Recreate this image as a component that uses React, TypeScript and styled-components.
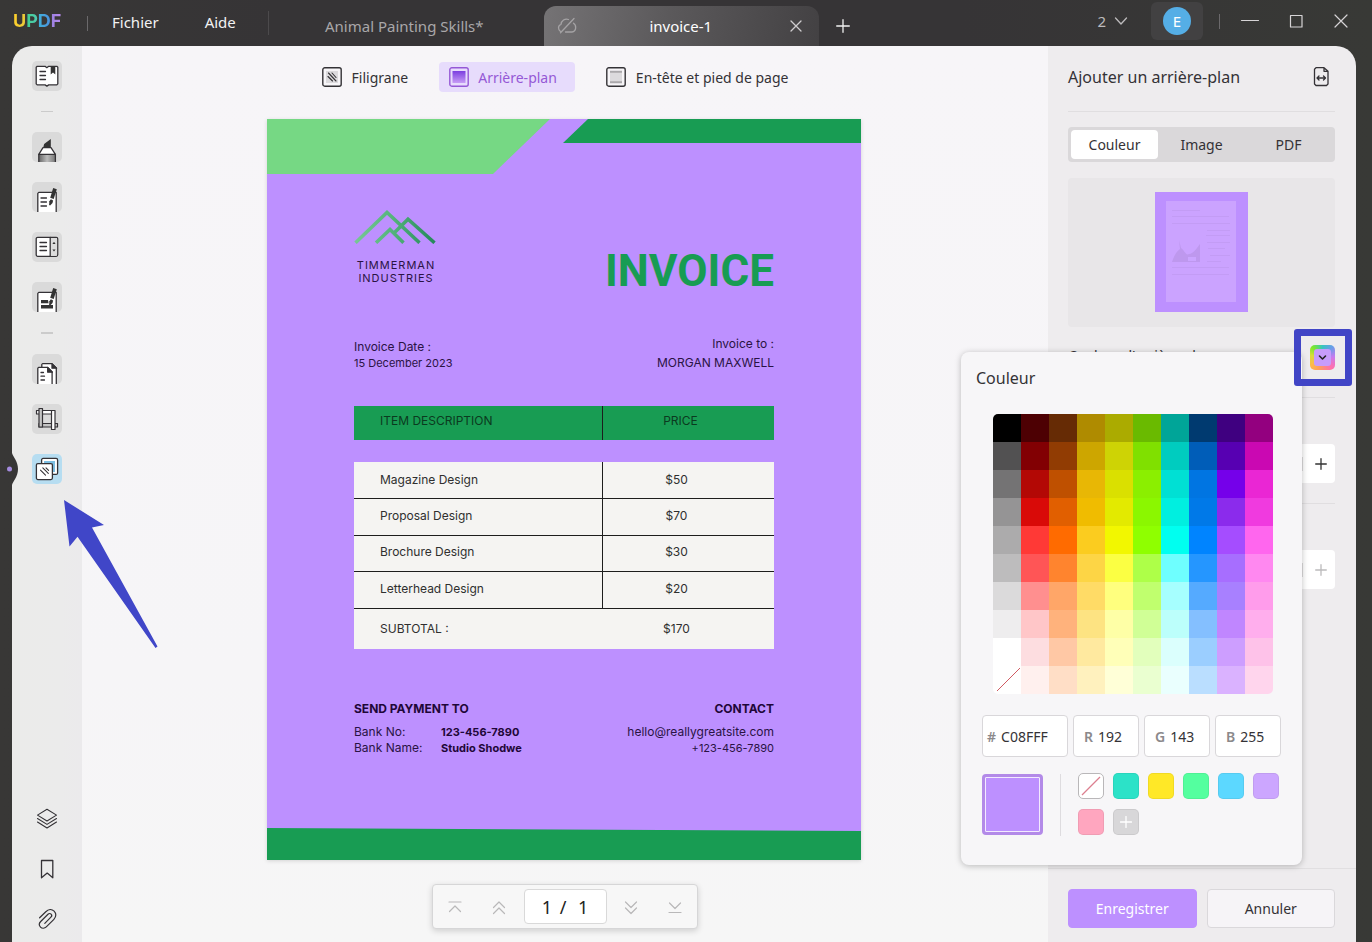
import React from "react";
import styled, { createGlobalStyle } from "styled-components";

const ink = "#343236";
const lilac = "#bd90ff";
const green = "#189c53";

const GlobalStyle = createGlobalStyle`
  *, *::before, *::after { box-sizing: border-box; }
  body { margin: 0; background: #363436; color: ${ink}; }
  body, button, input { font-family: "Noto Sans", "Open Sans", sans-serif; }
  button { border: 0; padding: 0; background: none; color: inherit; cursor: pointer; }
  h1, h2, p, dl, dd { margin: 0; }
  svg { display: block; }
`;

/* ---------- window frame ---------- */

const Window = styled.div`
  min-height: 100vh;
  display: flex;
  flex-direction: column;
  background: linear-gradient(90deg, #383736, #363436 20%, #363436 70%, #383936);
`;

const TitleBar = styled.header`
  height: 46px;
  display: flex;
  align-items: center;
  padding-left: 13px;
  padding-right: 24px;
  color: #f2f2f2;
`;

const Logo = styled.span`
  width: 74px;
  font: 700 18px/20px Inter, sans-serif;
  padding-bottom: 4px;
  color: #f5c52c;
`;

const LogoLetter = styled.span<{ $from: string; $to: string }>`
  background: linear-gradient(90deg, ${(p) => p.$from}, ${(p) => p.$to});
  background-clip: text;
  color: transparent;
`;

const BarRule = styled.span<{ $tall?: boolean }>`
  width: 1px;
  height: ${(p) => (p.$tall ? 24 : 15)}px;
  background: ${(p) => (p.$tall ? "#4c4a4c" : "#6b696b")};
`;

const Menu = styled.nav`
  display: flex;
  gap: 46px;
  padding: 0 32px 3px 24px;
`;

const MenuItem = styled.button`
  font-size: 15px;
  line-height: 22px;
`;

const Tabs = styled.div`
  align-self: stretch;
  display: flex;
  align-items: stretch;
  padding-top: 6px;
`;

const Tab = styled.div<{ $active?: boolean }>`
  width: 275px;
  display: flex;
  align-items: center;
  padding: 0 17px 0 13px;
  border-radius: 12px 12px 0 0;
  color: ${(p) => (p.$active ? "#ffffff" : "#a9a7a9")};
  background: ${(p) => (p.$active ? "linear-gradient(100deg, #757375, #5b595b 45%, #434143)" : "none")};
`;

const TabTitle = styled.button<{ $shift?: boolean }>`
  flex: 1;
  padding-right: ${(p) => (p.$shift ? 5 : 0)}px;
  font-size: 15px;
  line-height: 22px;
  text-align: center;
`;

const GlyphButton = styled.button`
  display: grid;
  place-items: center;
`;

const NewTab = styled(GlyphButton)`
  margin-left: 17px;
`;

const BarEnd = styled.div`
  margin-left: auto;
  display: flex;
  align-items: center;
  padding-bottom: 4px;
`;

const WindowCount = styled.button`
  display: flex;
  align-items: center;
  gap: 8px;
  margin-right: 23px;
  color: #bdbbbd;
  font-size: 15px;
  line-height: 22px;
`;

const Account = styled.button`
  width: 52px;
  height: 38px;
  display: grid;
  place-items: center;
  margin-right: 16px;
  border-radius: 6px;
  background: #424142;
`;

const Avatar = styled.span`
  width: 28px;
  height: 28px;
  border-radius: 50%;
  background: #55aee6;
  color: #ffffff;
  font-size: 15px;
  line-height: 29px;
`;

const WindowButtons = styled.div`
  display: flex;
  gap: 27px;
  padding-left: 20px;
`;

const Body = styled.div`
  position: relative;
  flex: 1;
  display: flex;
  margin: 0 16px 0 12px;
`;

/* ---------- left tool rail ---------- */

const Rail = styled.aside`
  position: relative;
  width: 70px;
  flex: none;
  display: flex;
  flex-direction: column;
  justify-content: space-between;
  align-items: center;
  padding: 15px 0 8px;
  border-radius: 20px 0 0 0;
  background: linear-gradient(90deg, #ebebea, #ebebeb 70%, #ebeaec);
`;

const RailGroup = styled.div`
  display: flex;
  flex-direction: column;
  align-items: center;
  gap: 20px;
`;

const Tool = styled.button<{ $plain?: boolean; $active?: boolean }>`
  width: 30px;
  height: 30px;
  overflow: hidden;
  border-radius: 5px;
  background: ${(p) => (p.$active ? "#b6ddf1" : p.$plain ? "none" : "#dadada")};
`;

const RailRule = styled.span<{ $bold?: boolean }>`
  width: 12px;
  height: ${(p) => (p.$bold ? 2 : 1)}px;
  background: #cbcbcb;
`;

const RailHandle = styled.button`
  position: absolute;
  left: -6px;
  top: 407px;
  width: 12px;
  height: 32px;
`;

const Pointer = styled.svg`
  position: absolute;
  left: 50px;
  top: 452px;
  pointer-events: none;
`;

/* ---------- document area ---------- */

const Main = styled.main`
  flex: 1;
  min-width: 0;
  display: flex;
  flex-direction: column;
  align-items: center;
  padding: 16px 0 13px;
  background: linear-gradient(#f7f5f8, #f6f5f7 70%, #f6f6f6);
`;

const PageTools = styled.div`
  display: flex;
  gap: 21px;
  padding-right: 20px;
  margin-bottom: 27px;
`;

const PageTool = styled.button<{ $active?: boolean }>`
  height: 30px;
  display: flex;
  align-items: center;
  gap: ${(p) => (p.$active ? 9 : 10)}px;
  padding: 0 ${(p) => (p.$active ? 18 : 10)}px 0 10px;
  border-radius: 4px;
  font-size: 14px;
  line-height: 20px;
  color: ${(p) => (p.$active ? "#9558d6" : ink)};
  background: ${(p) => (p.$active ? "#e7dcfc" : "none")};
  span { padding-top: 2px; }
`;

const Sheet = styled.article`
  width: 100%;
  max-width: 594px;
  min-height: 741px;
  display: flex;
  flex-direction: column;
  margin: 0 2px 24px 0;
  background: ${lilac};
  box-shadow: 0 1px 4px rgba(0, 0, 0, 0.14);
  color: #2a1344;
  font: 400 12px/16px Inter, sans-serif;
`;

const SheetContent = styled.div`
  padding: 35px 87px 0;
`;

const SheetRow = styled.div<{ $gap?: number; $bottom?: boolean }>`
  display: flex;
  justify-content: space-between;
  align-items: ${(p) => (p.$bottom ? "flex-end" : "flex-start")};
  margin-top: ${(p) => p.$gap ?? 0}px;
`;

const Brand = styled.div`
  height: 86px;
  width: 84px;
`;

const BrandName = styled.p`
  margin-top: 15px;
  font-size: 11px;
  line-height: 13px;
  letter-spacing: 1px;
  text-align: center;
`;

const InvoiceTitle = styled.h1`
  color: ${green};
  font: 700 44px/48px Roboto, sans-serif;
`;

const MetaBlock = styled.div<{ $right?: boolean }>`
  display: flex;
  flex-direction: column;
  gap: ${(p) => (p.$right ? 3 : 0)}px;
  text-align: ${(p) => (p.$right ? "right" : "left")};
`;

const InvoiceDate = styled.p`
  font-size: 11px;
`;

const Items = styled.table`
  width: 100%;
  margin-top: 35px;
  border-spacing: 0;
  color: #2f2f2f;
  th, td { font-weight: 400; text-align: left; padding: 0 0 0 26px; }
  tbody::before { content: ""; display: block; height: 22px; }
  th { background: ${green}; color: #0b3a20; padding-bottom: 4px; }
  td { background: #f5f4f2; }
`;

const ItemRow = styled.tr<{ $height: number; $raised?: boolean; $open?: boolean }>`
  height: ${(p) => p.$height}px;
  & > * { border-bottom: ${(p) => (p.$open ? "0" : "1px solid #1d1d1d")}; }
  & > :not(:last-child) { border-right: ${(p) => (p.$open ? "0" : "1px solid #1d1d1d")}; }
  td { padding-bottom: ${(p) => (p.$raised ? 3 : 0)}px; }
  th { border-bottom: 0; }
  & > :last-child { width: 171px; padding-left: 0; padding-right: 24px; text-align: center; }
  th:last-child { padding-right: 16px; }
`;

const Payment = styled.dl`
  display: grid;
  grid-template-columns: 87px auto;
  dd { font-size: 11px; font-weight: 700; color: #1f0738; }
`;

const SheetHeading = styled.h2`
  margin-bottom: 7px;
  font: 700 12px/16px Inter, sans-serif;
  color: #1f0738;
`;

const Contact = styled.address`
  text-align: right;
  font-style: normal;
`;

const SheetFoot = styled.div`
  margin-top: auto;
`;

const Pager = styled.div`
  width: 266px;
  height: 45px;
  display: flex;
  align-items: center;
  justify-content: space-between;
  padding: 0 10px;
  border: 1px solid #d6d6d7;
  border-radius: 4px;
  background: #f7f7f7;
  box-shadow: 0 2px 6px rgba(0, 0, 0, 0.16);
`;

const PagerPair = styled.div`
  display: flex;
  gap: 20px;
`;

const PagerButton = styled.button`
  width: 24px;
  height: 24px;
  display: grid;
  place-items: center;
  color: #b9b8b9;
`;

const PageBox = styled.label`
  width: 83px;
  height: 35px;
  display: flex;
  align-items: center;
  justify-content: center;
  gap: 7px;
  border: 1px solid #d9d9d9;
  border-radius: 4px;
  background: #ffffff;
  font-size: 18px;
  line-height: 24px;
  color: #222222;
`;

const PageInput = styled.input`
  width: 11px;
  padding: 0;
  border: 0;
  outline: 0;
  background: none;
  font-size: 18px;
  line-height: 24px;
  color: inherit;
`;

/* ---------- settings panel ---------- */

const Panel = styled.aside`
  width: 308px;
  flex: none;
  display: flex;
  flex-direction: column;
  border-radius: 0 20px 0 0;
  background: #eeecee;
`;

const PanelContent = styled.div`
  flex: 1;
  padding: 0 21px 0 20px;
`;

const PanelHead = styled.div`
  height: 66px;
  display: flex;
  align-items: center;
  justify-content: space-between;
  padding: 0 4px 3px 0;
  border-bottom: 1px solid #e0dee0;
`;

const PanelTitle = styled.h2`
  font-size: 16px;
  line-height: 24px;
  font-weight: 400;
`;

const Segments = styled.div`
  height: 35px;
  display: grid;
  grid-template-columns: repeat(3, 1fr);
  padding: 3px;
  margin: 15px 0 16px;
  border-radius: 4px;
  background: #dad8da;
`;

const Segment = styled.button<{ $active?: boolean }>`
  border-radius: 4px;
  font-size: 14px;
  line-height: 20px;
  background: ${(p) => (p.$active ? "#ffffff" : "none")};
`;

const Preview = styled.div`
  height: 149px;
  display: flex;
  justify-content: center;
  padding-top: 14px;
  border-radius: 4px;
  background: #e8e6e8;
`;

const ColorRow = styled.div`
  position: relative;
  height: 71px;
  display: flex;
  justify-content: space-between;
  padding-top: 18px;
  border-bottom: 1px solid #e0dee0;
  font-size: 14px;
  line-height: 22px;
`;

const ColorTrigger = styled.button`
  width: 25px;
  height: 25px;
  padding: 4px;
  border-radius: 5px;
  background: conic-gradient(#38c5c0, #6a9de8 12%, #c67af0 24%, #ff6fae 38%, #ff9e5c 55%, #ffb84a 65%, #d8dc3a 78%, #7ce82c 88%, #38c5c0);
`;

const TriggerFace = styled.span`
  width: 17px;
  height: 17px;
  display: grid;
  place-items: center;
  border-radius: 3px;
  background: #c79cfb;
`;

const Highlight = styled.span`
  position: absolute;
  z-index: 3;
  right: -17px;
  top: 2px;
  width: 58px;
  height: 57px;
  border: 7px solid #4145c6;
  border-radius: 3px;
  pointer-events: none;
`;

const StepperRow = styled.div<{ $last?: boolean }>`
  display: flex;
  justify-content: flex-end;
  padding: 46px 0 20px;
  border-bottom: ${(p) => (p.$last ? "0" : "1px solid #e0dee0")};
`;

const Stepper = styled.div<{ $muted?: boolean }>`
  width: 120px;
  height: 39px;
  display: flex;
  align-items: center;
  justify-content: flex-end;
  border-radius: 4px;
  background: #ffffff;
  color: ${(p) => (p.$muted ? "#bcbabc" : "#333333")};
`;

const StepButton = styled.button`
  width: 33px;
  height: 14px;
  display: grid;
  place-items: center;
  padding-left: 4px;
  border-left: 1px solid #dddbdd;
`;

const PanelFoot = styled.div`
  display: grid;
  grid-template-columns: 1fr 1fr;
  gap: 10px;
  padding: 20px 21px 14px 20px;
  border-top: 1px solid #e1dfe1;
`;

const Action = styled.button<{ $primary?: boolean }>`
  height: 39px;
  border: 1px solid ${(p) => (p.$primary ? lilac : "#dad8db")};
  border-radius: 4px;
  background: ${(p) => (p.$primary ? lilac : "#f6f4f7")};
  color: ${(p) => (p.$primary ? "#ffffff" : ink)};
  font-size: 14px;
  line-height: 20px;
`;

/* ---------- colour popover ---------- */

const Popover = styled.section`
  position: absolute;
  z-index: 2;
  right: 33px;
  top: 25px;
  width: 341px;
  height: 513px;
  padding: 14px 21px 0;
  border-radius: 8px;
  background: #f7f6f8;
  box-shadow: 0 1px 6px rgba(0, 0, 0, 0.25);
`;

const PopTitle = styled(PanelTitle)`
  margin: 0 0 24px -6px;
`;

const Palette = styled.div`
  width: 280px;
  display: grid;
  grid-template-columns: repeat(10, 1fr);
  margin-left: 11px;
  border-radius: 5px;
  overflow: hidden;
`;

const PaletteCell = styled.button<{ $color: string }>`
  height: 28px;
  background: ${(p) => p.$color};
`;

const Channels = styled.div`
  display: grid;
  grid-template-columns: 86px repeat(3, 66px);
  gap: 5px;
  margin: 21px 0 16px;
`;

const Channel = styled.label<{ $hex?: boolean }>`
  height: 42px;
  display: flex;
  align-items: center;
  gap: 5px;
  padding: 1px 0 0 ${(p) => (p.$hex ? 4 : 10)}px;
  border: 1px solid #d9d7da;
  border-radius: 4px;
  background: #ffffff;
  font-size: 14px;
  line-height: 20px;
  font-weight: 600;
  color: #8b898b;
`;

const ChannelInput = styled.input`
  min-width: 0;
  flex: 1;
  padding: 0;
  border: 0;
  outline: 0;
  background: none;
  font-size: 14px;
  line-height: 20px;
  color: ${ink};
`;

const SwatchArea = styled.div`
  display: flex;
`;

const CurrentColor = styled.div`
  width: 61px;
  height: 61px;
  margin-top: 1px;
  border: 3px solid #b38ae8;
  border-radius: 4px;
  background: ${lilac};
  box-shadow: inset 0 0 0 1px #f3eaff;
`;

const SwatchRule = styled.span`
  width: 1px;
  height: 62px;
  margin: 1px 17px 0 17px;
  background: #dedcdf;
`;

const Swatches = styled.div`
  display: grid;
  grid-template-columns: repeat(6, 26px);
  grid-auto-rows: 26px;
  gap: 10px 9px;
`;

const Swatch = styled.button<{ $color: string; $edge?: string }>`
  display: grid;
  place-items: center;
  overflow: hidden;
  border: 1px solid ${(p) => p.$edge ?? "rgba(0, 0, 0, 0.06)"};
  border-radius: 5px;
  background: ${(p) => p.$color};
`;

/* ---------- data ---------- */

const palette = [
  "#000000 #4d0003 #662b05 #af8b00 #abab00 #6aba00 #00a598 #003a70 #3f0080 #93007f",
  "#525152 #820003 #913c03 #cda600 #ced305 #80e000 #00ccbf #005db8 #5700b2 #ca08b2",
  "#747374 #b30805 #bf5000 #e8b705 #dae000 #8bef00 #00e0d4 #0075e2 #7500ea #ea26d4",
  "#959495 #d90a08 #e15f00 #f0bc00 #e3ea00 #8bf700 #00efe0 #0079e8 #8b2bec #f03adf",
  "#acabac #ff3936 #ff6b00 #fbcc1f #f2f700 #8fff00 #00fff0 #0084ff #a54dff #ff66ee",
  "#bdbcbd #ff5556 #ff842e #fdd545 #fbff43 #aeff48 #6effff #2596ff #a76eff #ff88f0",
  "#dbdadb #ff8f8f #ffa668 #ffdb66 #ffff7e #c0ff6e #a6ffff #55aaff #a880ff #ff9ceb",
  "#eeedee #ffc6c8 #ffb27c #fde382 #feffa6 #d0ff96 #bcfffb #84bfff #c086ff #ffaeed",
  "#ffffff #fddde0 #ffc8a5 #ffe99f #ffffb8 #e2ffbc #dbfffd #9bceff #cd9eff #fec2e9",
  "#ffffff #fff0ee #ffdec6 #fff1be #ffffd7 #eaffd0 #eafffe #badeff #dab2ff #ffd5ed",
].map((row) => row.split(" "));

const savedColors = ["#2ce2c8", "#ffe827", "#54ff9f", "#5cd8ff", "#cca6ff"];

const items = [
  { name: "Magazine Design", price: "$50", height: 37 },
  { name: "Proposal Design", price: "$70", height: 37 },
  { name: "Brochure Design", price: "$30", height: 36 },
  { name: "Letterhead Design", price: "$20", height: 37 },
];

/* ---------- icons ---------- */

type IconProps = { size?: number; width?: number; children: React.ReactNode };

const Icon = ({ size = 30, width = 1.3, children }: IconProps) => (
  <svg width={size} height={size} viewBox={`0 0 ${size} ${size}`} fill="none" stroke="currentColor"
    strokeWidth={width} strokeLinecap="round" strokeLinejoin="round" aria-hidden="true">
    {children}
  </svg>
);

const Pen = () => (
  <g stroke="none" fill="#333">
    <path d="M21.2 6l3.600 1.200-3.100 9.800-3.500-1.200z" />
    <path d="M17.400 19.300l1.500-2 2.200 1.100-.6 2.500-2.400 2.700-1-.6z" />
  </g>
);

const tools: Record<string, React.ReactNode> = {
  Lecteur: (
    <Icon>
      <path d="M5.2 5.3h7.9l1.7 1.4 1.9-1.4h8.1l1 1v16.6l-1 1h-8.1l-1.8 1.2-1.8-1.2H5.2l-1-1V6.3z" fill="#fff" />
      <path d="M8 10.5h5.5M8 14.5h5.5M8 18.5h5.5" />
      <path d="M18.7 5h4.6v8.4L21 11.6l-2.3 1.8z" fill="#333" stroke="none" />
    </Icon>
  ),
  Commentaire: (
    <Icon>
      <defs>
        <linearGradient id="marker" x1="0" x2="1"><stop offset="0" stopColor="#666" /><stop offset=".5" stopColor="#bbb" /><stop offset="1" stopColor="#777" /></linearGradient>
      </defs>
      <path d="M6.8 31v-8.7h16.6V31" fill="url(#marker)" />
      <path d="M11 15.7h8l4.4 6.6H6.8z" fill="#fff" />
      <path d="M11.3 15.3l.8-3.4L18.8 7v8.3z" fill="#333" stroke="none" />
    </Icon>
  ),
  Modifier: (
    <Icon>
      <path d="M5.8 31V11.4l1-1h17.4V31" fill="#fff" />
      <path d="M9 16h5.5M9 20h5.5M9 24h5.5" />
      <Pen />
    </Icon>
  ),
  Formulaire: (
    <Icon>
      <rect x="4.2" y="5.3" width="21.5" height="19" rx="1.5" fill="#fff" />
      <path d="M18.4 5.9h6l.7 1v15.8l-.7 1h-6z" fill="#dcdcdc" stroke="none" />
      <path d="M18.2 5.3v19M8 10.5h6.5M8 14.5h6.5M8 18.5h6.5" />
      <path d="M22 9.8l1.6 2.2h-3.2zM22 19.6l1.6-2.2h-3.2z" fill="#333" stroke="none" />
    </Icon>
  ),
  Biffer: (
    <Icon>
      <path d="M5.8 31V11.4l1-1h17.4V31" fill="#fff" />
      <path d="M9 18h7l.6 3.200H9zM9 23h12v3.400H9z" fill="#333" stroke="none" />
      <Pen />
    </Icon>
  ),
  Pages: (
    <Icon>
      <path d="M9.8 14V10.4l.8-.8h9.2l4.5 4.3V31h-5" fill="#fff" />
      <path d="M20 9.700v4.500h4.600z" fill="#333" />
      <path d="M5.8 31V14.2l.8-.8h9l4.5 4.6V31" fill="#fff" />
      <path d="M15.700 13.400v4.800h4.700z" fill="#333" />
      <path d="M9 18.5h2.500M9 22.200h3.500M9 26h3.500" />
    </Icon>
  ),
  Rogner: (
    <Icon width={1.200}>
      <path d="M4.500 6.500h18v3.500h-18z" fill="#fff" />
      <path d="M7 19.500h18.500V23H7z" fill="#c4c4c4" />
      <path d="M7 4.500h3.500V23H7z" fill="#c4c4c4" />
      <path d="M19.500 6.500H23v19h-3.500z" fill="#fff" />
    </Icon>
  ),
  "Outils de page": (
    <Icon>
      <rect x="9.6" y="4.4" width="16" height="16" rx="1.5" fill="#fff" />
      <path d="M12 7h11v11h-3V9.5h-8z" fill="#7dbfe2" stroke="none" />
      <rect x="4.4" y="9.6" width="16" height="16" rx="1.5" fill="#fff" />
      <path d="M8.500 16.200l5 5M10.800 13.800l5.500 5.500M14 13.800l2.600 2.600" strokeWidth="1.100" />
    </Icon>
  ),
};

const lowerTools: Record<string, React.ReactNode> = {
  Calques: (
    <Icon width={1.1}>
      <path d="M15 5.3l9.5 5.8L15 17l-9.500-5.900z" />
      <path d="M5.500 14.500L15 20.400l9.500-5.900M5.500 18L15 24l9.500-6" />
    </Icon>
  ),
  Signets: (
    <Icon width={1.300}>
      <path d="M9.500 6.500h11.300v17.300l-5.600-4.700-5.700 4.700z" />
    </Icon>
  ),
  "Pièces jointes": (
    <Icon width={1.200}>
      <path d="M7.600 13.800l6.200-6.100c2.600-2.600 6-2.800 8.300-.6s2.300 5.700-.2 8.200l-7.600 7.600c-1.700 1.700-4.300 1.800-5.800.2s-1.500-3.900.2-5.600l7.300-7.200c1-1 2.300-1 3.100-.2s.8 2.100-.2 3.100l-6.100 6.100" />
    </Icon>
  ),
};

const Plus = ({ size = 12 }: { size?: number }) => (
  <Icon size={size} width={1.3}>
    <path d={`M${size / 2} .7V${size - 0.7}M.7 ${size / 2}H${size - 0.7}`} />
  </Icon>
);

const SheetPreview = () => (
  <svg width="93" height="120" viewBox="0 0 93 120" aria-label="Aperçu">
    <rect width="93" height="120" fill={lilac} />
    <rect x="11" y="9" width="70" height="101" fill="#cba3ff" />
    <g stroke="#c39cf5" strokeWidth="1">
      <path d="M17 18.500h28M17 24.500h57M17 31.500h58M52 38.500h23M51 43.500h24M52 50.500h23M53 56.500h17M55 63.500h20M52 69.500h14M17 75.500h57M17 82.500h57" />
    </g>
    <path d="M17 70c2-6 4-10 8-13l-1-9 2 8c4 3 5 8 8 6 4 0 8-6 11-10v18z" fill="#be98ee" />
    <path d="M33 65h8v4h-8z" fill="#cba5ff" />
  </svg>
);

/* ---------- app ---------- */

export default function App() {
  return (
    <Window>
      <GlobalStyle />
      <TitleBar>
        <Logo>
          <LogoLetter $from="#ffd02b" $to="#e8c83a">U</LogoLetter>
          <LogoLetter $from="#3fd08c" $to="#52c8b4">P</LogoLetter>
          <LogoLetter $from="#3fb0d8" $to="#4c8fe0">D</LogoLetter>
          <LogoLetter $from="#9a80e0" $to="#b98af0">F</LogoLetter>
        </Logo>
        <BarRule />
        <Menu>
          <MenuItem>Fichier</MenuItem>
          <MenuItem>Aide</MenuItem>
        </Menu>
        <BarRule $tall />
        <Tabs>
          <Tab>
            <TabTitle>Animal Painting Skills*</TabTitle>
          </Tab>
          <Tab $active>
            <Icon size={20} width={1.3}>
              <path d="M3.500 15.500C.8 13.500.7 9.500 4 8.500 4.300 4.500 8 2.300 11.500 3.500M16.500 7.200c3.200 2 3 8.300-1.500 8.800H8.500M17 2.500L3.500 16.800" stroke="#a5a3a5" />
            </Icon>
            <TabTitle $shift>invoice-1</TabTitle>
            <GlyphButton aria-label="Fermer l'onglet">
              <Icon size={12}><path d="M1 1l10 10M11 1L1 11" stroke="#cfcdcf" /></Icon>
            </GlyphButton>
          </Tab>
          <NewTab aria-label="Nouvel onglet"><Plus size={14} /></NewTab>
        </Tabs>
        <BarEnd>
          <WindowCount>
            2
            <Icon size={14}><path d="M1.500 4l5.500 6 5.500-6" /></Icon>
          </WindowCount>
          <Account aria-label="Compte"><Avatar>E</Avatar></Account>
          <BarRule />
          <WindowButtons>
            <GlyphButton aria-label="Réduire"><Icon size={20} width={1.2}><path d="M1.500 9.500h17" stroke="#d6d4d6" /></Icon></GlyphButton>
            <GlyphButton aria-label="Agrandir"><Icon size={20} width={1.2}><path d="M3.500 4.500h11.500v11.500H3.500z" stroke="#d6d4d6" /></Icon></GlyphButton>
            <GlyphButton aria-label="Fermer"><Icon size={14} width={1.2}><path d="M1 1l12 12M13 1L1 13" stroke="#d6d4d6" /></Icon></GlyphButton>
          </WindowButtons>
        </BarEnd>
      </TitleBar>

      <Body>
        <Rail>
          <RailGroup>
            {Object.entries(tools).map(([name, icon]) => (
              <React.Fragment key={name}>
                {name === "Commentaire" && <RailRule />}
                {name === "Pages" && <RailRule $bold />}
                <Tool aria-label={name} $active={name === "Outils de page"}>{icon}</Tool>
              </React.Fragment>
            ))}
          </RailGroup>
          <RailGroup>
            {Object.entries(lowerTools).map(([name, icon]) => (
              <Tool key={name} $plain aria-label={name}>{icon}</Tool>
            ))}
          </RailGroup>
          <RailHandle aria-label="Replier la barre">
            <svg width="12" height="32" viewBox="0 0 12 32">
              <path d="M6 0c1 4 6 8 6 16s-5 12-6 16z" fill="#373636" />
              <circle cx="3.5" cy="16" r="2.5" fill="#a48be0" />
            </svg>
          </RailHandle>
        </Rail>

        <Main>
          <PageTools>
            <PageTool>
              <Icon size={20} width={1.4}>
                <rect x=".8" y=".8" width="18.4" height="18.4" rx="2" />
                <rect x="4" y="4" width="12" height="12" fill="#dcdadd" stroke="none" />
                <path d="M6 9.500l4.500 4.500M6.500 6l7.500 8M10 6l4 4.500" strokeWidth="1.100" />
              </Icon>
              <span>Filigrane</span>
            </PageTool>
            <PageTool $active>
              <Icon size={20} width={1.4}>
                <defs>
                  <linearGradient id="fill" x1="0" y1="0" x2="0" y2="1"><stop offset="0" stopColor="#7b3fe0" /><stop offset="1" stopColor="#c79cf5" /></linearGradient>
                </defs>
                <rect x=".8" y=".8" width="18.4" height="18.4" rx="2" />
                <rect x="3.500" y="4" width="13" height="12" fill="url(#fill)" stroke="none" />
              </Icon>
              <span>Arrière-plan</span>
            </PageTool>
            <PageTool>
              <Icon size={20} width={1.4}>
                <rect x=".8" y=".8" width="18.4" height="18.4" rx="2" />
                <rect x="4" y="4" width="12" height="12" fill="#dcdadd" stroke="none" />
                <path d="M4 4.800h12M4 15.200h12" stroke="#aaa8ab" strokeWidth="2" strokeLinecap="butt" />
              </Icon>
              <span>En-tête et pied de page</span>
            </PageTool>
          </PageTools>

          <Sheet>
            <svg width="100%" height="55" viewBox="0 0 594 55" preserveAspectRatio="none" aria-hidden="true">
              <path d="M0 0h283l-57 55H0z" fill="#76d884" />
              <path d="M321 0h273v24H296z" fill={green} />
            </svg>
            <SheetContent>
              <SheetRow $bottom>
                <Brand>
                  <svg width="82" height="35" viewBox="0 0 82 35" fill="none" stroke="url(#peaks)" strokeWidth="3.500" aria-hidden="true">
                    <defs>
                      <linearGradient id="peaks" gradientUnits="userSpaceOnUse" x1="0" y1="0" x2="82" y2="0">
                        <stop offset="0" stopColor="#78c796" /><stop offset=".45" stopColor="#55b57c" /><stop offset="1" stopColor="#23875a" />
                      </linearGradient>
                    </defs>
                    <path d="M1.500 33.800L33 3.500l32.500 30.300M39 25L54 10.200l26.500 23.600M22 33.800l14-13.300 13.500 13.300" />
                  </svg>
                  <BrandName>TIMMERMAN<br />INDUSTRIES</BrandName>
                </Brand>
                <InvoiceTitle>INVOICE</InvoiceTitle>
              </SheetRow>
              <SheetRow $bottom $gap={41}>
                <MetaBlock><p>Invoice Date :</p><InvoiceDate>15 December 2023</InvoiceDate></MetaBlock>
                <MetaBlock $right><p>Invoice to :</p><p>MORGAN MAXWELL</p></MetaBlock>
              </SheetRow>
              <Items>
                <thead>
                  <ItemRow $height={34}><th scope="col">ITEM DESCRIPTION</th><th scope="col">PRICE</th></ItemRow>
                </thead>
                <tbody>
                  {items.map((item, i) => (
                    <ItemRow key={item.name} $height={item.height} $raised={i > 0}>
                      <td>{item.name}</td><td>{item.price}</td>
                    </ItemRow>
                  ))}
                  <ItemRow $height={40} $open><td>SUBTOTAL :</td><td>$170</td></ItemRow>
                </tbody>
              </Items>
              <SheetRow $gap={52}>
                <div>
                  <SheetHeading>SEND PAYMENT TO</SheetHeading>
                  <Payment>
                    <dt>Bank No:</dt><dd>123-456-7890</dd>
                    <dt>Bank Name:</dt><dd>Studio Shodwe</dd>
                  </Payment>
                </div>
                <Contact>
                  <SheetHeading>CONTACT</SheetHeading>
                  <p>hello@reallygreatsite.com</p>
                  <InvoiceDate as="p">+123-456-7890</InvoiceDate>
                </Contact>
              </SheetRow>
            </SheetContent>
            <SheetFoot>
              <svg width="100%" height="32" viewBox="0 0 594 32" preserveAspectRatio="none" aria-hidden="true">
                <path d="M0 0l594 3v29H0z" fill={green} />
              </svg>
            </SheetFoot>
          </Sheet>

          <Pager>
            <PagerPair>
              <PagerButton aria-label="Première page"><Icon size={16} width={1.2}><path d="M2 3h12M2.500 12.500L8 7l5.500 5.500" /></Icon></PagerButton>
              <PagerButton aria-label="Page précédente"><Icon size={16} width={1.2}><path d="M2.500 8.500L8 3l5.500 5.500M2.500 14.500L8 9l5.500 5.500" /></Icon></PagerButton>
            </PagerPair>
            <PageBox>
              <PageInput defaultValue="1" aria-label="Page" />
              <span>/</span>
              <span>&nbsp;1</span>
            </PageBox>
            <PagerPair>
              <PagerButton aria-label="Page suivante"><Icon size={16} width={1.2}><path d="M2.500 3L8 8.500 13.500 3M2.500 9L8 14.500 13.500 9" /></Icon></PagerButton>
              <PagerButton aria-label="Dernière page"><Icon size={16} width={1.2}><path d="M2.500 4L8 9.500 13.500 4M2 13.500h12" /></Icon></PagerButton>
            </PagerPair>
          </Pager>
        </Main>

        <Panel>
          <PanelContent>
            <PanelHead>
              <PanelTitle>Ajouter un arrière-plan</PanelTitle>
              <GlyphButton aria-label="Plage de pages">
                <Icon size={20}>
                  <path d="M5 .700h8l4 3.600V17l-1.500 1.500H5L3.500 17V2.200zM13 .700v3.600h4" />
                  <path d="M6.200 11h8M8 9l-2 2 2 2M12.500 9l2 2-2 2" />
                </Icon>
              </GlyphButton>
            </PanelHead>
            <Segments>
              <Segment $active>Couleur</Segment>
              <Segment>Image</Segment>
              <Segment>PDF</Segment>
            </Segments>
            <Preview><SheetPreview /></Preview>
            <ColorRow>
              <span>Couleur d'arrière-plan</span>
              <ColorTrigger aria-label="Choisir la couleur">
                <TriggerFace>
                  <Icon size={9} width={1.6}><path d="M1.500 3l3 3 3-3" stroke="#222" /></Icon>
                </TriggerFace>
              </ColorTrigger>
              <Highlight />
              <Popover aria-label="Couleur">
                <PopTitle>Couleur</PopTitle>
                <Palette>
                  {palette.flatMap((row, r) =>
                    row.map((color, c) => (
                      <PaletteCell key={`${r}-${c}`} $color={color} aria-label={r === 9 && c === 0 ? "Transparent" : color}>
                        {r === 9 && c === 0 && (
                          <svg width="28" height="28" viewBox="0 0 28 28" fill="none" aria-hidden="true"><path d="M4 25L27 2" stroke="#d05a62" strokeWidth="1" /></svg>
                        )}
                      </PaletteCell>
                    ))
                  )}
                </Palette>
                <Channels>
                  <Channel $hex>#<ChannelInput defaultValue="C08FFF" /></Channel>
                  <Channel>R<ChannelInput defaultValue="192" /></Channel>
                  <Channel>G<ChannelInput defaultValue="143" /></Channel>
                  <Channel>B<ChannelInput defaultValue="255" /></Channel>
                </Channels>
                <SwatchArea>
                  <CurrentColor />
                  <SwatchRule />
                  <Swatches>
                    <Swatch $color="#ffffff" $edge="#b9b7b9" aria-label="Aucune couleur">
                      <svg width="24" height="24" viewBox="0 0 24 24" fill="none" aria-hidden="true"><path d="M3 21L21 3" stroke="#dc7f90" strokeWidth="1.300" /></svg>
                    </Swatch>
                    {savedColors.map((color) => <Swatch key={color} $color={color} aria-label={color} />)}
                    <Swatch $color="#ffa6bf" aria-label="#ffa6bf" />
                    <Swatch $color="#d8d7d9" aria-label="Ajouter une couleur">
                      <Icon size={12}><path d="M6 .5v11M.5 6h11" stroke="#fff" /></Icon>
                    </Swatch>
                  </Swatches>
                </SwatchArea>
              </Popover>
            </ColorRow>
            <StepperRow>
              <Stepper><StepButton aria-label="Augmenter l'opacité"><Plus /></StepButton></Stepper>
            </StepperRow>
            <StepperRow $last>
              <Stepper $muted><StepButton aria-label="Augmenter le rapport"><Plus /></StepButton></Stepper>
            </StepperRow>
          </PanelContent>
          <PanelFoot>
            <Action $primary>Enregistrer</Action>
            <Action>Annuler</Action>
          </PanelFoot>
        </Panel>

        <Pointer width="98" height="152" viewBox="0 0 98 152" aria-hidden="true">
          <path d="M2 2l40 25-12 2.500 65.500 119-2 1.500-78-111.300L7.500 48.500z" fill="#4046c8" />
        </Pointer>
      </Body>
    </Window>
  );
}
